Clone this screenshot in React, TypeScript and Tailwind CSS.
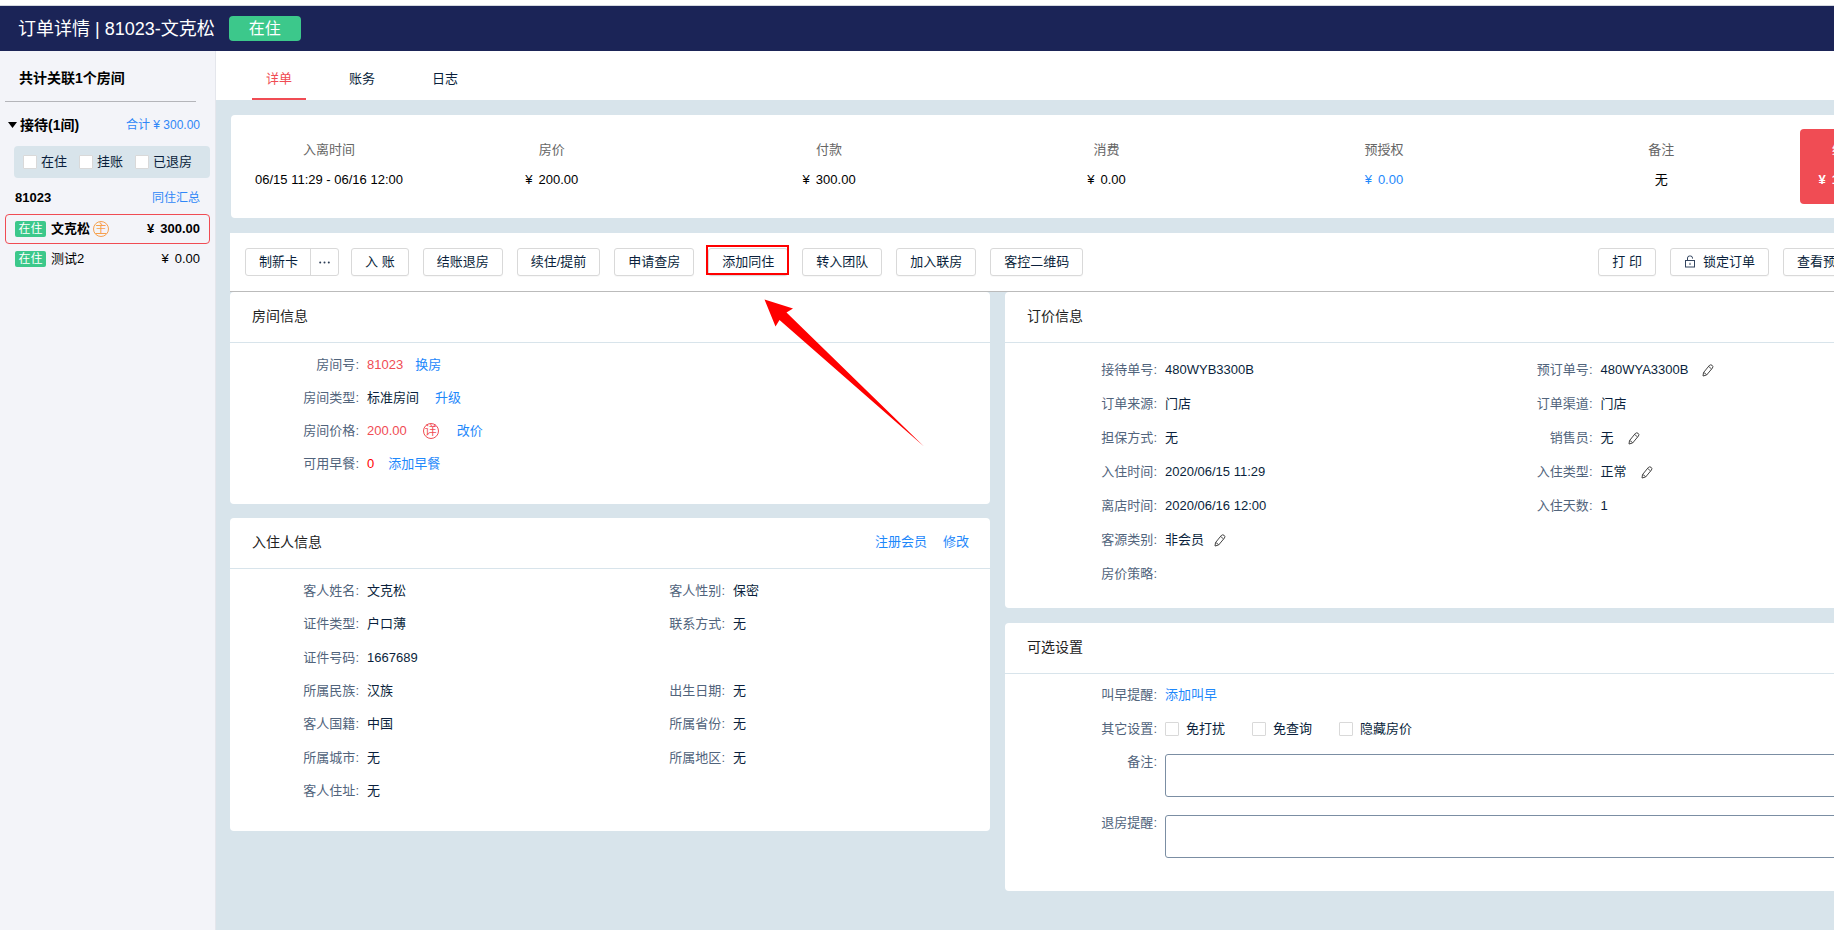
import { useState } from 'react';
import type { ReactNode } from 'react';

const rooms = [
  { name: '文克松', amount: '300.00', primary: true },
  { name: '测试2', amount: '0.00', primary: false },
];

const summary = [
  { label: '房价', amount: '200.00' },
  { label: '付款', amount: '300.00' },
  { label: '消费', amount: '0.00' },
  { label: '预授权', amount: '0.00', link: true },
];

function Pencil() {
  return (
    <svg viewBox="0 0 12 13" className="h-[13px] w-3" fill="none" stroke="#444" strokeWidth="1" strokeLinejoin="round">
      <path d="M1 12 L1.5 8.6 L7.2 1.6 Q8.6 0.2 10.1 1.3 Q11.6 2.5 10.4 4.1 L4.6 11 Z" />
      <path d="M1.5 8.6 Q3.6 8.8 4.6 11 M6.6 2.4 L9.6 5" strokeWidth="0.9" />
    </svg>
  );
}

function EditButton({ label }: { label: string }) {
  return (
    <button type="button" aria-label={label} className="flex cursor-pointer items-center">
      <Pencil />
    </button>
  );
}

function Link({ children }: { children: ReactNode }) {
  return (
    <a href="#" className="text-[#1e88fb]">
      {children}
    </a>
  );
}

function Money({ amount }: { amount: string }) {
  return (
    <span className="inline-flex gap-1.5">
      <span>¥</span>
      <span>{amount}</span>
    </span>
  );
}

function Btn({ children }: { children: ReactNode }) {
  return (
    <button
      type="button"
      className="flex h-7 cursor-pointer items-center gap-[7px] rounded-[3px] border border-[#d9d9d9] bg-white px-[13px] pb-px whitespace-nowrap text-[#0a1f3c] shadow-[0_1px_1px_rgba(0,0,0,0.03)]"
    >
      {children}
    </button>
  );
}

function Card({ title, actions, children }: { title: string; actions?: ReactNode; children: ReactNode }) {
  return (
    <section className="rounded bg-white">
      <header className="flex h-[51px] items-center justify-between border-b border-[#d8e4eb] pr-[21px] pb-0.5 pl-[22px]">
        <h2 className="text-sm text-[#222]">{title}</h2>
        {actions}
      </header>
      {children}
    </section>
  );
}

function Label({ text, wide }: { text: string; wide?: boolean }) {
  return (
    <span className={`flex shrink-0 justify-end text-[#51647c] ${wide ? 'w-[138px]' : 'w-[115px]'}`}>
      {text}
      <span>:</span>
    </span>
  );
}

function Field({ label, wide, className, children }: { label: string; wide?: boolean; className?: string; children?: ReactNode }) {
  return (
    <div className={`flex items-center ${className ?? ''}`}>
      <Label text={label} wide={wide} />
      <div className="ml-2 flex items-center text-[#0a1f3c]">{children}</div>
    </div>
  );
}

function Check({ label, className }: { label: string; className: string }) {
  return (
    <label className={`flex cursor-pointer items-center ${className}`}>
      <input type="checkbox" className="size-3.5 appearance-none rounded-[1px] border border-[#d9d9d9] bg-white checked:bg-[#1e88fb]" />
      {label}
    </label>
  );
}

function Status() {
  return (
    <span className="flex h-4 w-[31px] items-center justify-center rounded-[2px] bg-[#3cc88b] text-xs font-normal text-white">在住</span>
  );
}

function Sidebar() {
  return (
    <aside className="flex w-[216px] shrink-0 flex-col border-r border-[#e4e6ec] bg-[#f3f4f9] text-black">
      <div className="mr-[19px] ml-[5px] flex h-[51px] items-center border-b border-[#b4b5ba] pt-1 pl-3.5 text-sm font-bold">
        共计关联1个房间
      </div>
      <div className="flex h-11 items-center justify-between pt-0.5 pr-[15px] pl-2">
        <button type="button" className="flex cursor-pointer items-center gap-[3px] text-sm font-bold">
          <svg viewBox="0 0 9 6" className="h-1.5 w-[9px]">
            <path d="M0 0 H9 L4.5 6 Z" />
          </svg>
          接待(1间)
        </button>
        <span className="text-xs text-[#2f87f7]">合计 ¥ 300.00</span>
      </div>
      <div className="mr-[5px] ml-3.5 flex h-8 items-center gap-3 rounded bg-[#d8e4eb] pb-px pl-[9px] text-[#0a1f3c]">
        {['在住', '挂账', '已退房'].map((t) => (
          <Check key={t} label={t} className="gap-1" />
        ))}
      </div>
      <div className="flex h-9 items-center justify-between pt-1 pr-[15px] pl-[15px]">
        <span className="font-bold">81023</span>
        <a href="#" className="text-xs text-[#2f87f7]">同住汇总</a>
      </div>
      <ul className="mr-[5px] ml-[5px]">
        {rooms.map((r) => (
          <li
            key={r.name}
            className={`flex h-[30px] items-center rounded border pr-[9px] pl-[9px] ${r.primary ? 'border-[#f04c54] font-bold' : 'border-transparent'}`}
          >
            <Status />
            <span className="ml-[5px]">{r.name}</span>
            {r.primary && (
              <span className="ml-[3px] flex size-4 items-center justify-center rounded-full border border-[#f7a04e] text-xs font-normal text-[#f7a04e]">
                主
              </span>
            )}
            <span className="ml-auto flex">
              <Money amount={r.amount} />
            </span>
          </li>
        ))}
      </ul>
    </aside>
  );
}

function Tabs() {
  const [active, setActive] = useState('详单');
  return (
    <nav className="flex h-[49px] gap-[29px] bg-white pl-9">
      {['详单', '账务', '日志'].map((t) => (
        <button
          key={t}
          type="button"
          onClick={() => setActive(t)}
          className={`w-[54px] cursor-pointer border-b-2 pt-2.5 pb-0.5 ${active === t ? 'border-[#f04c54] text-[#f04c54]' : 'border-transparent text-[#0a1f3c]'}`}
        >
          {t}
        </button>
      ))}
    </nav>
  );
}

function Summary() {
  return (
    <section className="ml-px flex h-[103px] rounded bg-white p-3.5 text-center leading-5">
      <div className="flex w-[168px] flex-col justify-center gap-2.5 pb-[3px]">
        <div className="text-[#666]">入离时间</div>
        <div className="whitespace-nowrap text-black">06/15 11:29 - 06/16 12:00</div>
      </div>
      {summary.map((s) => (
        <div key={s.label} className="flex flex-1 flex-col justify-center gap-2.5 pb-[3px]">
          <div className="text-[#666]">{s.label}</div>
          <div className={`flex justify-center ${s.link ? 'text-[#1e88fb]' : 'text-black'}`}>
            <Money amount={s.amount} />
          </div>
        </div>
      ))}
      <div className="flex flex-1 flex-col justify-center gap-2.5 pb-[3px]">
        <div className="text-[#666]">备注</div>
        <div className="text-black">无</div>
      </div>
      <div className="flex w-[90px] flex-col justify-center gap-2.5 rounded bg-[#f04c54] pb-[3px] text-white">
        <div>结余</div>
        <div className="flex justify-center font-bold">
          <Money amount="100.00" />
        </div>
      </div>
    </section>
  );
}

function Toolbar() {
  return (
    <div className="flex h-[59px] justify-between border-b border-[#bbb] bg-white px-[15px] pt-[15px]">
      <div className="flex gap-3">
        <div className="flex h-7 rounded-[3px] border border-[#d9d9d9] bg-white text-[#0a1f3c]">
          <button type="button" className="cursor-pointer border-r border-[#d9d9d9] pr-3 pb-px pl-[13px]">制新卡</button>
          <button type="button" aria-label="更多制卡操作" className="flex w-[27px] cursor-pointer items-center justify-center">
            <svg viewBox="0 0 11 3" className="h-[3px] w-[11px]" fill="#2b3c55">
              <circle cx="1.2" cy="1.5" r="1" />
              <circle cx="5.5" cy="1.5" r="1" />
              <circle cx="9.8" cy="1.5" r="1" />
            </svg>
          </button>
        </div>
        <div className="flex gap-3.5">
          <Btn>入 账</Btn>
          <Btn>结账退房</Btn>
          <Btn>续住/提前</Btn>
          <Btn>申请查房</Btn>
          <div className="relative h-7">
            <Btn>添加同住</Btn>
            <div className="pointer-events-none absolute -top-[3px] -right-px -left-[2px] h-[30px] border-2 border-[#ff0000]" />
            <svg viewBox="0 0 161 148" className="pointer-events-none absolute top-[51px] left-14 z-10 h-[148px] w-[161px]">
              <path d="M0.5 0.5 L29 9.5 L22.5 13.5 L160 147.5 L15.5 21 L11.5 27.5 Z" fill="#ff0000" />
            </svg>
          </div>
          <Btn>转入团队</Btn>
          <Btn>加入联房</Btn>
          <Btn>客控二维码</Btn>
        </div>
      </div>
      <div className="flex gap-3.5">
        <Btn>打 印</Btn>
        <Btn>
          <svg viewBox="0 0 12 13" className="h-[13px] w-3" fill="none" stroke="#33455f" strokeWidth="1">
            <rect x="1.5" y="5.5" width="9" height="6.5" />
            <path d="M3.5 5.5 V3 Q3.5 1 5.5 1 H6.5 Q8.5 1 8.5 3 V3.6 M6 7.8 V10" />
          </svg>
          锁定订单
        </Btn>
        <Btn>查看预订详情</Btn>
      </div>
    </div>
  );
}

function RoomCard() {
  return (
    <Card title="房间信息">
      <div className="px-3.5 pt-[5px] pb-[23px]">
        <div className="grid h-[133px] grid-rows-4">
          <Field label="房间号">
            <span className="mr-3 text-[#f04c54]">81023</span>
            <Link>换房</Link>
          </Field>
          <Field label="房间类型">
            <span className="mr-4">标准房间</span>
            <Link>升级</Link>
          </Field>
          <Field label="房间价格">
            <span className="mr-4 text-[#f04c54]">200.00</span>
            <button type="button" className="mr-[18px] flex size-4 cursor-pointer items-center justify-center rounded-full border border-[#f04c54] text-xs text-[#f04c54]">
              详
            </button>
            <Link>改价</Link>
          </Field>
          <Field label="可用早餐">
            <span className="mr-3.5 text-[#ff0000]">0</span>
            <Link>添加早餐</Link>
          </Field>
        </div>
      </div>
    </Card>
  );
}

function GuestCard() {
  return (
    <Card
      title="入住人信息"
      actions={
        <div className="flex gap-4">
          <Link>注册会员</Link>
          <Link>修改</Link>
        </div>
      }
    >
      <div className="px-3.5 pt-[5px] pb-[23px]">
        <div className="grid h-[234px] grid-cols-2 grid-rows-7">
          <Field label="客人姓名">文克松</Field>
          <Field label="客人性别">保密</Field>
          <Field label="证件类型">户口薄</Field>
          <Field label="联系方式">无</Field>
          <Field label="证件号码" className="col-span-2">1667689</Field>
          <Field label="所属民族">汉族</Field>
          <Field label="出生日期">无</Field>
          <Field label="客人国籍">中国</Field>
          <Field label="所属省份">无</Field>
          <Field label="所属城市">无</Field>
          <Field label="所属地区">无</Field>
          <Field label="客人住址">无</Field>
        </div>
      </div>
    </Card>
  );
}

function OrderCard() {
  return (
    <Card title="订价信息">
      <div className="px-3.5 pt-2.5 pb-[17px]">
        <div className="grid h-[238px] grid-cols-2 grid-rows-7">
          <Field wide label="接待单号">480WYB3300B</Field>
          <Field wide label="预订单号">
            <span className="mr-3.5">480WYA3300B</span>
            <EditButton label="编辑预订单号" />
          </Field>
          <Field wide label="订单来源">门店</Field>
          <Field wide label="订单渠道">门店</Field>
          <Field wide label="担保方式">无</Field>
          <Field wide label="销售员">
            <span className="mr-3.5">无</span>
            <EditButton label="编辑销售员" />
          </Field>
          <Field wide label="入住时间">2020/06/15 11:29</Field>
          <Field wide label="入住类型">
            <span className="mr-3.5">正常</span>
            <EditButton label="编辑入住类型" />
          </Field>
          <Field wide label="离店时间">2020/06/16 12:00</Field>
          <Field wide label="入住天数">1</Field>
          <Field wide label="客源类别" className="col-span-2">
            <span className="mr-2.5">非会员</span>
            <EditButton label="编辑客源类别" />
          </Field>
          <Field wide label="房价策略" />
        </div>
      </div>
    </Card>
  );
}

function NoteField({ id, label }: { id: string; label: string }) {
  return (
    <div className="flex">
      <label htmlFor={id} className="-mt-0.5">
        <Label wide text={label} />
      </label>
      <textarea id={id} className="ml-2 h-[43px] flex-1 resize-none rounded-[3px] border border-[#7b8ea3] bg-white px-2 py-1 outline-none" />
    </div>
  );
}

function OptionsCard() {
  return (
    <Card title="可选设置">
      <div className="px-3.5 pt-1 pb-[33px]">
        <div className="grid h-[68px] grid-rows-2">
          <Field wide label="叫早提醒">
            <Link>添加叫早</Link>
          </Field>
          <Field wide label="其它设置">
            <div className="flex gap-[27px]">
              {['免打扰', '免查询', '隐藏房价'].map((t) => (
                <Check key={t} label={t} className="gap-[7px]" />
              ))}
            </div>
          </Field>
        </div>
        <div className="mt-2 flex flex-col gap-[18px]">
          <NoteField id="remark" label="备注" />
          <NoteField id="checkout-note" label="退房提醒" />
        </div>
      </div>
    </Card>
  );
}

export default function App() {
  return (
    <div className="min-h-screen overflow-hidden bg-white pt-[5px] font-['Liberation_Sans','Noto_Sans_CJK_SC',sans-serif] text-[13px] leading-5">
      <div className="flex min-h-[calc(100vh-5px)] w-[calc(100%+86px)] flex-col">
        <header className="flex h-[46px] shrink-0 items-center gap-3.5 border-t border-[#d5d9e0] bg-[#1b2457] pl-[18px] text-white">
          <h1 className="text-lg">订单详情 | 81023-文克松</h1>
          <span className="flex h-[25px] w-[72px] items-center justify-center rounded bg-[#3cc88b] text-base">在住</span>
        </header>
        <div className="flex flex-1">
          <Sidebar />
          <main className="flex min-w-0 flex-1 flex-col bg-[#d8e4eb]">
            <Tabs />
            <div className="flex flex-col pt-[15px] pr-4 pl-3.5">
              <Summary />
              <div className="mt-[15px]">
                <Toolbar />
              </div>
              <div className="flex items-start gap-[15px]">
                <div className="flex flex-[760] flex-col gap-3.5">
                  <RoomCard />
                  <GuestCard />
                </div>
                <div className="flex flex-[899] flex-col gap-[15px]">
                  <OrderCard />
                  <OptionsCard />
                </div>
              </div>
            </div>
          </main>
        </div>
      </div>
    </div>
  );
}
